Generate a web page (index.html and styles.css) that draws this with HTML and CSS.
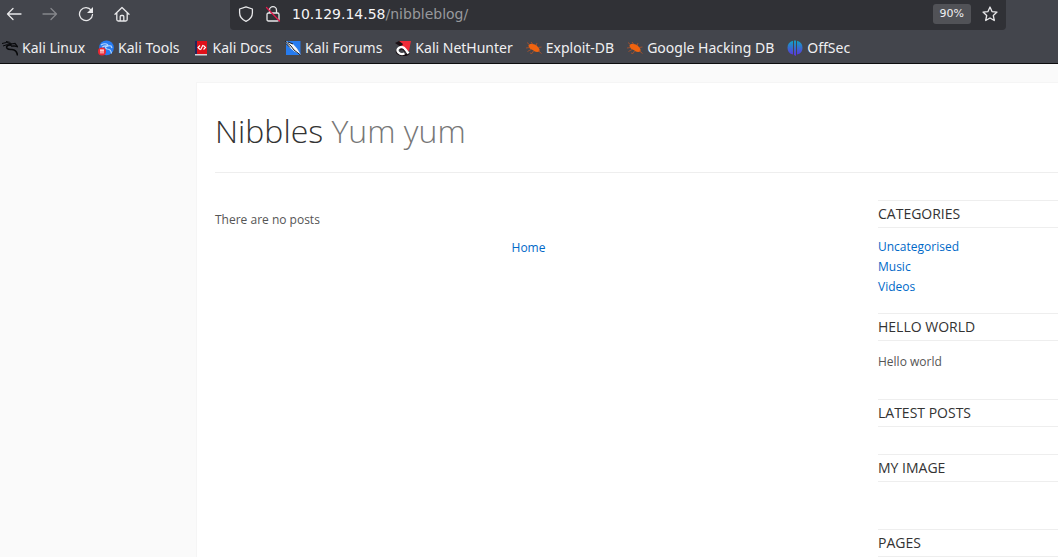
FILE: index.html
```html
<!DOCTYPE html>
<html lang="en">
<head>
<meta charset="utf-8">
<title>Nibbles - Yum yum</title>
<link rel="stylesheet" href="styles.css">
</head>
<body>
<div class="browser">
  <div class="toolbar">
    <div class="nav-buttons">
      <button class="nav-button" aria-label="Back"><svg class="icon" viewBox="0 0 16 16"><path d="M15 8H1.5M7 2.5L1.5 8L7 13.5"/></svg></button>
      <button class="nav-button nav-button-off" aria-label="Forward" disabled><svg class="icon" viewBox="0 0 16 16"><path d="M1 8h13.500M9 2.500L14.500 8L9 13.500"/></svg></button>
      <button class="nav-button" aria-label="Reload"><svg class="icon" viewBox="0 0 16 16"><path d="M13.300 4.300A6.500 6.500 0 1 0 14.500 8.500"/><path class="fill" d="M15 1v6H9z"/></svg></button>
      <button class="nav-button" aria-label="Home"><svg class="icon" viewBox="0 0 16 16"><path d="M1 8.200L8 1.500l7 6.700M2.800 7v6.500q0 1.500 1.500 1.500h7.400q1.500 0 1.500-1.500V7M6.200 15v-4.500q0-1 1-1h1.600q1 0 1 1V15"/></svg></button>
    </div>
    <div class="address">
      <button class="address-button" aria-label="Tracking protection"><svg class="icon" viewBox="0 0 16 16"><path d="M8 .8L14.400 3v3.800c0 4-2.700 7-6.400 8.500C4.300 13.800 1.600 10.800 1.600 6.800V3z"/></svg></button>
      <button class="address-button" aria-label="Connection not secure"><svg class="icon" viewBox="0 0 16 16"><path d="M4.500 7V4.200a3.500 3.500 0 0 1 7 0V7M3.500 7h9q1.500 0 1.500 1.500v5q0 1.500-1.500 1.500h-9Q2 15 2 13.500v-5Q2 7 3.500 7z"/><path class="slash" d="M1.500 1.500l13 13.500"/></svg></button>
      <span class="url"><span class="url-host">10.129.14.58</span>/nibbleblog/</span>
      <button class="zoom-level">90%</button>
      <button class="address-button" aria-label="Bookmark this page"><svg class="icon" viewBox="0 0 16 16"><path d="M8 1l2 4.600 5 .5-3.700 3.400 1 5L8 12l-4.300 2.500 1-5L1 6.100l5-.5z"/></svg></button>
    </div>
  </div>
  <nav class="bookmarks" aria-label="Bookmarks">
    <a class="bookmark" href="#"><svg class="favicon" viewBox="0 0 16 16"><g fill="none" stroke="#08090b"><path d="M0 3.500Q5 1 9 4.200M1 6Q5 3.500 9.500 5.500M4 1.500Q8 1.500 10 4.500" stroke-width="1"/><path d="M9 4.500Q3.500 5.500 5 8.200q1 1.500 5 1.300 5 .5 5.500 6" stroke-width="1.600"/><path d="M9 4l4-.5 2.500 3.200-3.500-.8-3 .2" stroke-width="1.200"/></g></svg>Kali Linux</a>
    <a class="bookmark" href="#"><svg class="favicon" viewBox="0 0 16 16"><circle cx="8.500" cy="7.800" r="7.400" fill="#267bf2"/><path d="M3 5q4-2.500 7 0M4 7.200q3-2 6.500-1M9.500 5.500l3.500.5 1 2M9 6q-3 2 0 3 4 .2 4.500 4.500" fill="none" stroke="#b8d8ff" stroke-width="1.200"/><circle cx="4" cy="11.500" r="4" fill="#eb2733"/><path d="M2 10h4M3 10v3.500M5 10v3.500" stroke="#fff"/></svg>Kali Tools</a>
    <a class="bookmark" href="#"><svg class="favicon" viewBox="0 0 16 16"><path d="M2 1h2v13H2z" fill="#23265b"/><path d="M4 1h10v13H4z" fill="#df1019"/><path d="M2 14h12v1.500H2z" fill="#d5d4d9"/><path d="M7 5.500L5 7.500l2 2M10.500 5.500l2 2-2 2M10 5l-2.500 5" fill="none" stroke="#fff" stroke-width="1.100"/></svg>Kali Docs</a>
    <a class="bookmark" href="#"><svg class="favicon" viewBox="0 0 16 16"><path d="M1 1h14.500v14H1z" fill="#267bee"/><path d="M0 1l8 3 4 4.500 4 6.500-6.500-3.500L4 7z" fill="#f4f5f7"/><path d="M0 1l6 5 3 4 6.500 5M1 3.500l4 4M3 2l5 2" fill="none" stroke="#171b24" stroke-width="1"/></svg>Kali Forums</a>
    <a class="bookmark" href="#"><svg class="favicon" viewBox="0 0 16 16"><path d="M4 1h12l-2 10-7-3z" fill="#ef2b38"/><path d="M0 3l4-2 4 3-2 3z" fill="#1b1014"/><path d="M3 9q-3 3 1 5.200Q10 17 14 13" fill="none" stroke="#171015" stroke-width="2"/><path d="M13.500 13.500L10.500 9.500Q8 6 4.500 7.500 1 9.500 3.500 12.500 6 15 9.500 13.500" fill="none" stroke="#fff" stroke-width="2.300"/><path d="M5 10q1.500-1.500 3-.5l2.500 3" fill="none" stroke="#241820" stroke-width="1.100"/></svg>Kali NetHunter</a>
    <a class="bookmark" href="#"><svg class="favicon" viewBox="0 0 16 16"><use href="#bug"/></svg>Exploit-DB</a>
    <a class="bookmark" href="#"><svg class="favicon" viewBox="0 0 16 16"><g id="bug"><path d="M2.500 5q2.500-2 5.500-.8 2.500.3 3.500 2.300 2.500 2 2 5-4 1.300-6.800-1.500Q2.500 8.800 2.500 5z" fill="#f0630f"/><path d="M4 5L1 2.500M7 4.500L5 2M10 5.500l1-2.500M12 7.500l3.500-.5M3.500 7.500L0 8M5 9.500l-3.500 2M7.500 11L6 13.500l-2-.5M12.500 11l3 2.500" fill="none" stroke="#b45328" stroke-width=".8"/></g></svg>Google Hacking DB</a>
    <a class="bookmark" href="#"><svg class="favicon" viewBox="0 0 16 16"><defs><linearGradient id="violet" x1="0" y1="0" x2="0" y2="16" gradientUnits="userSpaceOnUse"><stop offset=".1" stop-color="#159bc4"/><stop offset="1" stop-color="#6030dc"/></linearGradient></defs><path d="M6 .8v13.700Q.5 13.500.5 7.700.5 2.500 6 .8zM7 .5h2V16L7 15zM10 .8q5.500 1.700 5.500 6.900 0 5.800-5.500 6.800z" fill="url(#violet)"/></svg>OffSec</a>
  </nav>
</div>
<div class="page">
  <div class="sheet">
    <header class="site-header">
      <h1 class="site-title">Nibbles <span class="slogan">Yum yum</span></h1>
    </header>
    <div class="columns">
      <main class="posts">
        <p class="empty">There are no posts</p>
        <nav class="pager" aria-label="Pages"><a href="#">Home</a></nav>
      </main>
      <aside class="sidebar">
        <section class="plugin">
          <h2>Categories</h2>
          <ul class="plugin-body">
            <li><a href="#">Uncategorised</a></li>
            <li><a href="#">Music</a></li>
            <li><a href="#">Videos</a></li>
          </ul>
        </section>
        <section class="plugin">
          <h2>Hello world</h2>
          <div class="plugin-body"><p class="note">Hello world</p></div>
        </section>
        <section class="plugin">
          <h2>Latest posts</h2>
        </section>
        <section class="plugin">
          <h2>My image</h2>
          <div class="plugin-body picture"></div>
        </section>
        <section class="plugin">
          <h2>Pages</h2>
        </section>
      </aside>
    </div>
  </div>
</div>
</body>
</html>
```
FILE: styles.css
```css
* {
  box-sizing: border-box;
}

body {
  margin: 0;
  min-height: 100vh;
  display: flex;
  flex-direction: column;
  overflow: hidden;
  background: #fafafa;
  color: #555;
  font: 12px/20px "Open Sans", sans-serif;
}

h1, h2, p, ul {
  margin: 0;
  padding: 0;
}

button {
  border: 0;
  padding: 0;
  background: none;
  color: inherit;
  font: inherit;
}

a {
  color: #0069c8;
  text-decoration: none;
}

/* Browser chrome */
.browser {
  background: #43454c;
  border-bottom: 1px solid #0c0c0d;
  color: #f0f0f2;
  font: 14px/20px "DejaVu Sans", sans-serif;
}

.toolbar {
  display: flex;
  gap: 100px;
  padding: 0 52px 0 6px;
}

.nav-buttons {
  display: flex;
  align-items: center;
  gap: 20px;
  height: 28px;
}

.nav-button,
.address-button {
  display: flex;
}

.nav-button-off {
  opacity: 0.4;
}

.icon {
  width: 16px;
  height: 16px;
  fill: none;
  stroke: #e8e8ea;
  stroke-width: 1.3;
  stroke-linejoin: round;
  stroke-linecap: round;
}

.icon .fill {
  fill: #e8e8ea;
  stroke: none;
}

.icon .slash {
  stroke: #e21b4d;
}

.address {
  flex: 1;
  display: flex;
  align-items: center;
  gap: 11px;
  height: 30px;
  padding: 0 8px 2px;
  border-radius: 0 0 4px 4px;
  background: #303136;
}

.url {
  flex: 1;
  color: #98999d;
}

.url-host {
  color: #f5f5f7;
}

.zoom-level {
  height: 20px;
  padding: 0 7px;
  border-radius: 3px;
  background: #515257;
  font-size: 11px;
}

.bookmarks {
  display: flex;
  gap: 13px;
  padding: 8px 2px 5px;
  font-family: "Noto Sans", sans-serif;
  white-space: nowrap;
}

.bookmark {
  display: flex;
  align-items: center;
  gap: 4px;
  color: #f0f0f2;
}

.favicon {
  flex: none;
  width: 16px;
  height: 16px;
}

/* Blog page */
.page {
  flex: 1;
  display: flex;
  padding: 18px 0 0 196px;
}

.sheet {
  flex: 1;
  padding-left: 18px;
  border: solid #f5f5f5;
  border-width: 1px 0 0 1px;
  background: #fff;
}

.site-header {
  padding: 23px 0 16px;
  border-bottom: 1px solid #eee;
}

.site-title {
  color: #333;
  font-size: 32px;
  font-weight: 300;
  line-height: 50px;
}

.slogan {
  color: #777;
}

.columns {
  display: grid;
  grid-template-columns: 1fr 180px;
  gap: 36px;
  padding-top: 27px;
}

.posts {
  padding-top: 10px;
}

.pager {
  padding-top: 8px;
  text-align: center;
}

.plugin {
  padding-bottom: 27px;
}

.plugin h2 {
  border: solid #eee;
  border-width: 1px 0;
  color: #333;
  font-size: 14px;
  font-weight: 400;
  line-height: 26px;
  text-transform: uppercase;
}

.plugin-body {
  padding-top: 9px;
  margin-bottom: -11px;
  list-style: none;
}

.note {
  padding: 2px 0 11px;
}

.picture {
  height: 31px;
}
```
